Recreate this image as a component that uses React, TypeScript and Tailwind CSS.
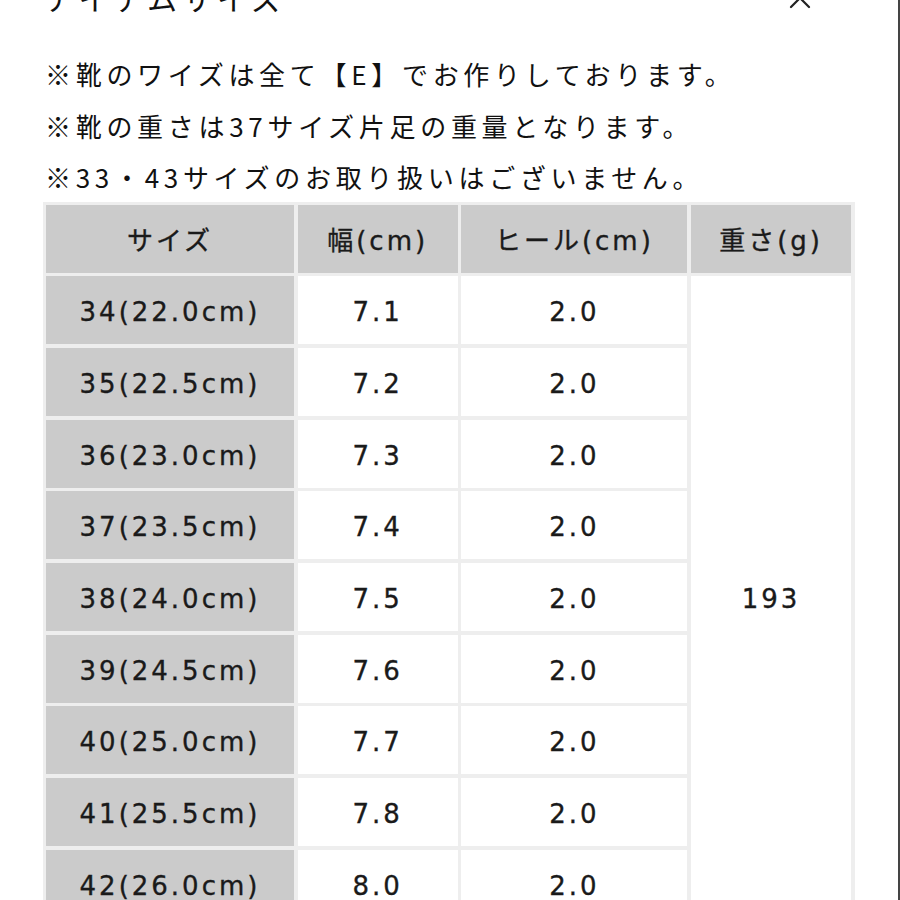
import React from 'react';

const rows = [
    { size: '34(22.0cm)', width: '7.1', heel: '2.0' },
    { size: '35(22.5cm)', width: '7.2', heel: '2.0' },
    { size: '36(23.0cm)', width: '7.3', heel: '2.0' },
    { size: '37(23.5cm)', width: '7.4', heel: '2.0' },
    { size: '38(24.0cm)', width: '7.5', heel: '2.0' },
    { size: '39(24.5cm)', width: '7.6', heel: '2.0' },
    { size: '40(25.0cm)', width: '7.7', heel: '2.0' },
    { size: '41(25.5cm)', width: '7.8', heel: '2.0' },
    { size: '42(26.0cm)', width: '8.0', heel: '2.0' },
];

const notes = [
    '※靴のワイズは全て【E】でお作りしております。',
    '※靴の重さは37サイズ片足の重量となります。',
    '※33・43サイズのお取り扱いはございません。',
];

const cellFont = { fontFamily: '"DejaVu Sans", "Noto Sans CJK JP", sans-serif' };
const cellText = 'flex items-center justify-center pt-[5px] text-[26px] tracking-[3px] text-[#1a1a1a] [-webkit-text-stroke:0.35px_#1a1a1a]';
const headCell = `bg-[#cbcbcb] ${cellText}`;
const bodyCell = `bg-white ${cellText}`;

export default function App() {
    return (
        <div
            className="w-[900px] h-[900px] overflow-hidden bg-white border-r-2 border-[#444] text-[#111]"
            style={{ fontFamily: '"Noto Sans CJK JP", "Noto Sans", sans-serif' }}
        >
            {/* Title */}
            <div className="flex items-center justify-between pl-[45px] pr-[86px] h-[40px] -mt-[23px]">
                <h2 className="text-[30px] tracking-[5px] leading-[40px] font-normal">アイテムサイズ</h2>
                <svg width="24" height="24" viewBox="0 0 24 24" className="mt-[2px]">
                    <path d="M3 3 L21 21 M21 3 L3 21" stroke="#222" strokeWidth="2.2" strokeLinecap="round" />
                </svg>
            </div>

            {/* Notes */}
            <div className="pl-[45px] mt-[31px]">
                {notes.map((n, i) => (
                    <p key={i} className="text-[26px] leading-[51.5px] tracking-[4.7px] whitespace-nowrap">{n}</p>
                ))}
            </div>

            {/* Size table */}
            <div
                className="ml-[43px] -mt-[1px] w-[812px] bg-[#eeeeee] p-[3px] grid grid-cols-[248px_160px_226px_160px] auto-rows-[68px] gap-[3.7px]"
                style={cellFont}
            >
                <div className={headCell}>サイズ</div>
                <div className={headCell}>幅(cm)</div>
                <div className={headCell}>ヒール(cm)</div>
                <div className={headCell}>重さ(g)</div>
                {rows.map((r, i) => (
                    <React.Fragment key={r.size}>
                        <div className={headCell} style={{ gridColumn: 1, gridRow: i + 2 }}>{r.size}</div>
                        <div className={bodyCell} style={{ gridColumn: 2, gridRow: i + 2 }}>{r.width}</div>
                        <div className={bodyCell} style={{ gridColumn: 3, gridRow: i + 2 }}>{r.heel}</div>
                    </React.Fragment>
                ))}
                <div className={`${bodyCell} col-start-4 row-start-2 row-span-9`}>193</div>
            </div>
        </div>
    );
}
